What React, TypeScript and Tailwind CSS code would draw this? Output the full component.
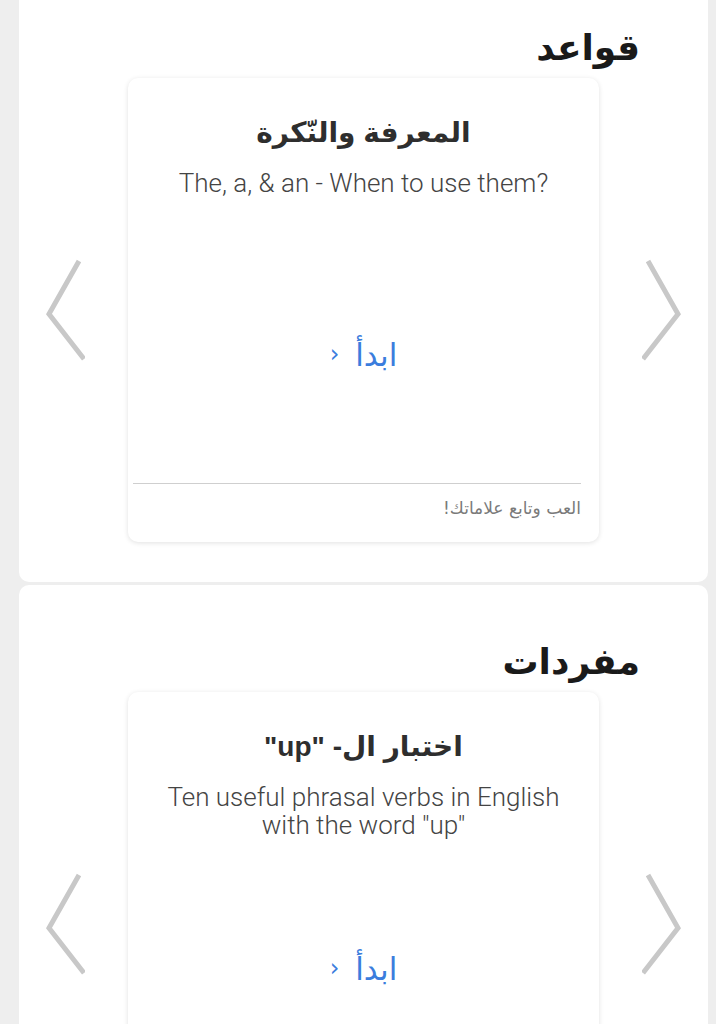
import React from 'react'

interface Lesson {
  section: string
  title: string
  description: string[]
}

const lessons: Lesson[] = [
  {
    section: 'قواعد',
    title: 'المعرفة والنّكرة',
    description: ['The, a, & an - When to use them?'],
  },
  {
    section: 'مفردات',
    title: 'اختبار ال- "up"',
    description: ['Ten useful phrasal verbs in English', 'with the word "up"'],
  },
]

function Chevron({ side }: { side: 'left' | 'right' }) {
  const points = side === 'left' ? '34,4 4,57 39,102' : '6,4 36,57 1,102'
  return (
    <svg width="40" height="106" viewBox="0 0 40 106" className="shrink-0">
      <polyline points={points} fill="none" stroke="#c8c8c8" strokeWidth="5" />
    </svg>
  )
}

function LessonCard({ lesson }: { lesson: Lesson }) {
  return (
    <div className="w-[471px] h-[464px] shrink-0 bg-white rounded-[10px] shadow-[0_1px_5px_rgba(0,0,0,0.12)] flex flex-col">
      <div className="h-[250px] pt-[35px] flex flex-col items-center text-center">
        <h2
          dir="rtl"
          className="text-[28px] leading-[40px] font-bold text-[#2e2e2e] font-['Liberation_Sans','DejaVu_Sans',sans-serif]"
        >
          {lesson.title}
        </h2>
        <div className="mt-[16px] text-[26px] leading-[28px] font-light text-[#444444] font-['Roboto',sans-serif]">
          {lesson.description.map((line) => (
            <p key={line}>{line}</p>
          ))}
        </div>
      </div>
      <div className="h-[54px] flex items-center justify-center">
        <span dir="rtl" className="flex items-center gap-[16px] text-[31px] text-[#3b7ddd] font-['DejaVu_Sans',sans-serif]">
          <span>ابدأ</span>
          <span className="text-[24px] pb-[3px]">‹</span>
        </span>
      </div>
      <div className="flex-1" />
      <div className="h-px bg-[#cfcfcf] ml-[5px] mr-[18px]" />
      <p
        dir="rtl"
        className="mt-[12px] mb-[22px] pr-[18px] text-[17px] leading-[24px] text-[#7a7a7a] font-['DejaVu_Sans',sans-serif]"
      >
        العب وتابع علاماتك!
      </p>
    </div>
  )
}

function Section({ lesson, first }: { lesson: Lesson; first: boolean }) {
  return (
    <section
      className={`bg-white ${first ? 'rounded-b-[10px] -mt-[29px]' : 'rounded-t-[10px] mt-[3px]'} pt-[53px] pb-[40px]`}
    >
      <h1
        dir="rtl"
        className="pr-[68px] text-[36px] leading-[48px] font-bold text-[#1a1a1a] font-['DejaVu_Sans',sans-serif] mb-[6px]"
      >
        {lesson.section}
      </h1>
      <div className="flex items-center">
        <div className="ml-[26px] mr-[43px] flex">
          <Chevron side="left" />
        </div>
        <LessonCard lesson={lesson} />
        <div className="ml-[43px] flex">
          <Chevron side="right" />
        </div>
      </div>
    </section>
  )
}

export default function App() {
  return (
    <div className="h-[1024px] overflow-hidden bg-[#eeeeee] pl-[19px] pr-[8px]">
      {lessons.map((lesson, i) => (
        <Section key={lesson.section} lesson={lesson} first={i === 0} />
      ))}
    </div>
  )
}
